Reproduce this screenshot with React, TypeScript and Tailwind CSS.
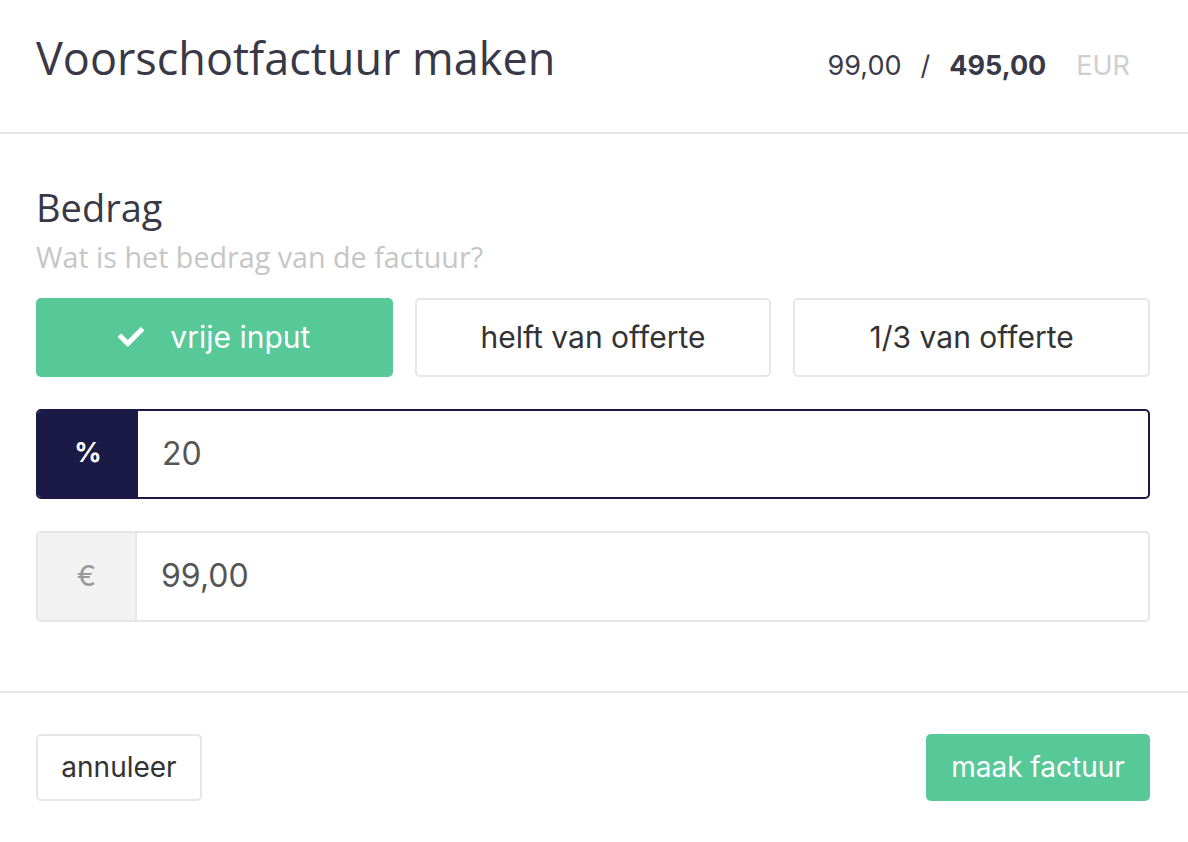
import React, { useState } from 'react';
import { FaCheck } from 'react-icons/fa';

const headingFont = { fontFamily: '"Open Sans", "Noto Sans", sans-serif' };

const options = ['vrije input', 'helft van offerte', '1/3 van offerte'];

export default function App() {
  const [selected, setSelected] = useState(0);

  return (
    <div className="w-[1188px] h-[842px] bg-white text-[#3a3a48] font-['Inter',sans-serif]">
      <header className="h-[134px] flex items-start justify-between pl-[36px] pr-[58px] pt-[35px] border-b-2 border-[#e6e6e6]">
        <h1 className="text-[45px] leading-none text-[#383847]" style={headingFont}>
          Voorschotfactuur maken
        </h1>
        <div className="flex items-baseline text-[27px] leading-none pt-[17px]">
          <span className="text-[#3a3a48]">99,00</span>
          <span className="mx-[19px]">/</span>
          <span className="font-bold text-[#383847]">495,00</span>
          <span className="ml-[30px] text-[#cfcfcf]">EUR</span>
        </div>
      </header>

      <section className="pl-[36px] pr-[38px] pt-[54px] pb-[69px] border-b-2 border-[#e6e6e6]">
        <h2 className="text-[38px] leading-none text-[#383847]" style={headingFont}>Bedrag</h2>
        <p className="mt-[17px] text-[28.7px] leading-none text-[#c6c6c6]" style={headingFont}>
          Wat is het bedrag van de factuur?
        </p>

        <div className="mt-[26px] grid grid-cols-3 gap-[22px]">
          {options.map((o, i) => (
            <button
              key={o}
              onClick={() => setSelected(i)}
              className={`h-[79px] rounded-[5px] flex items-center justify-center gap-[26px] text-[30px] ${
                selected === i
                  ? 'bg-[#57c898] text-white'
                  : 'bg-white border-2 border-[#e6e6e6] text-[#333]'
              }`}
            >
              {selected === i && <FaCheck className="w-[26px] h-[26px]" />}
              <span>{o}</span>
            </button>
          ))}
        </div>

        <div className="mt-[32px] h-[90px] flex rounded-[5px] border-2 border-[#1b1a47] overflow-hidden">
          <div className="w-[100px] bg-[#1b1a47] text-white font-bold text-[27px] flex items-center justify-center">%</div>
          <div className="flex-1 flex items-center pl-[24px] text-[32px] text-[#555]">20</div>
        </div>

        <div className="mt-[32px] h-[91px] flex rounded-[5px] border-2 border-[#e6e6e6] overflow-hidden">
          <div className="w-[99px] bg-[#f2f2f2] border-r-2 border-[#e6e6e6] text-[#999] text-[29px] flex items-center justify-center">€</div>
          <div className="flex-1 flex items-center pl-[24px] text-[32px] text-[#555]">99,00</div>
        </div>
      </section>

      <footer className="flex items-center justify-between pl-[36px] pr-[38px] pt-[41px]">
        <button className="w-[166px] h-[67px] rounded-[5px] border-2 border-[#e6e6e6] text-[28px] text-[#333] flex items-center justify-center">
          annuleer
        </button>
        <button className="w-[224px] h-[67px] rounded-[5px] bg-[#57c898] text-white text-[28px] flex items-center justify-center">
          maak factuur
        </button>
      </footer>
    </div>
  );
}
